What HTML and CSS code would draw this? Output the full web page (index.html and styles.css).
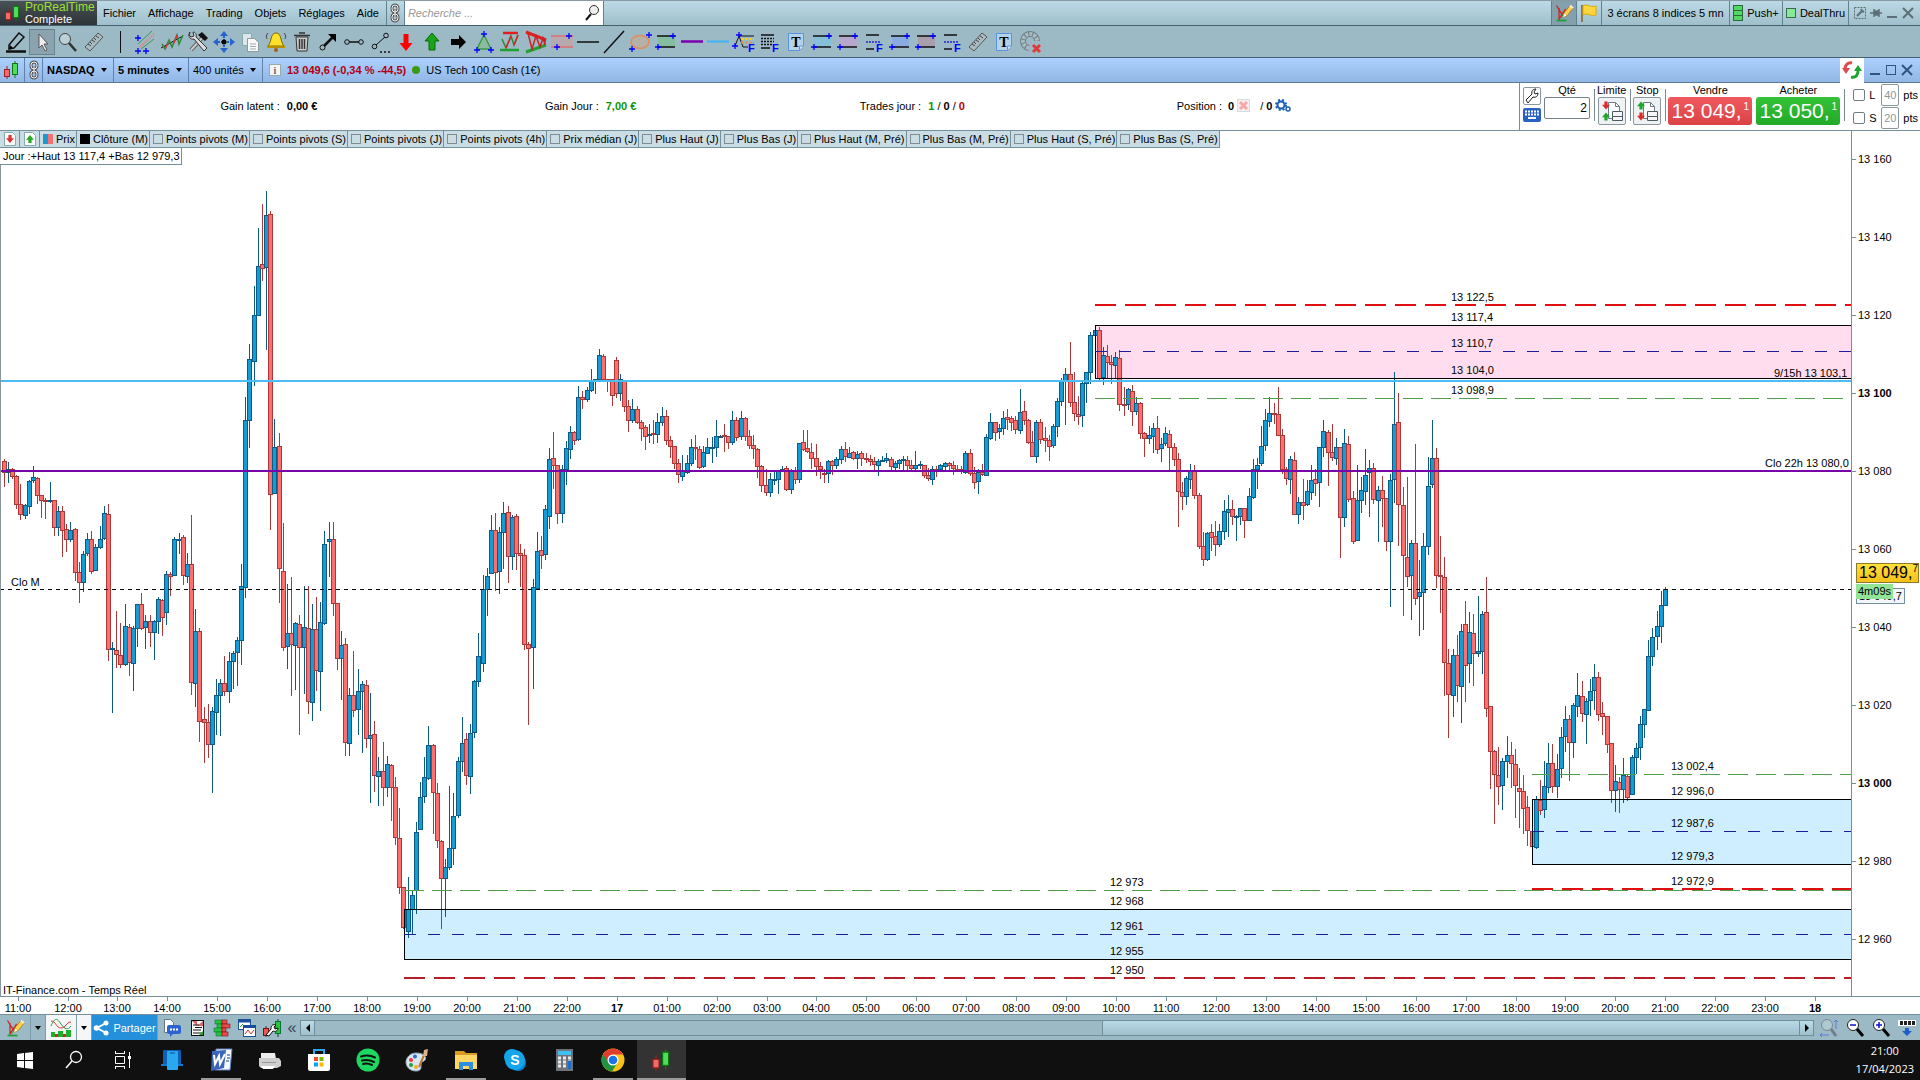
FILE: index.html
```html
<!DOCTYPE html>
<html lang="fr">

<head>
    <meta charset="UTF-8">
    <meta name="viewport" content="width=device-width, initial-scale=1.0">
    <title>ProRealTime Complete - NASDAQ 5 minutes</title>
    <link rel="stylesheet" href="styles.css">
</head>

<body>

    <!-- Icônes partagées -->
    <svg class="sprites" aria-hidden="true">
        <symbol id="i-chain" viewBox="0 0 12 20">
            <g fill="none" stroke="#555" stroke-width="3"><rect x="3" y="2" width="6" height="7" rx="3"/><rect x="3" y="11" width="6" height="7" rx="3"/><path d="M6 6v8"/></g>
            <g fill="none" stroke="#f4f4f4" stroke-width="1"><rect x="3" y="2" width="6" height="7" rx="3"/><rect x="3" y="11" width="6" height="7" rx="3"/><path d="M6 6v8"/></g>
        </symbol>
        <symbol id="i-candles" viewBox="0 0 20 20">
            <path d="M5 6v13" stroke="#a02020"/><rect x="2.5" y="9.500" width="5" height="7" fill="#f26b6b" stroke="#a02020"/>
            <path d="M13 1v17" stroke="#0c7a0c"/><rect x="10.500" y="3.500" width="5" height="11" fill="#4fdc5c" stroke="#0c7a0c"/>
        </symbol>
        <symbol id="i-ruler" viewBox="0 0 24 24">
            <path d="M3 17L16 3l5 4L8 21z" fill="#a9bcc4" stroke="#555"/>
            <path d="M6 14l3 2M8 12l2 2M10 10l3 2M12 8l2 2M14 6l3 2" stroke="#444"/>
        </symbol>
        <symbol id="i-note" viewBox="0 0 24 24">
            <path d="M4.500 3.500h15v12l-4 5h-11z" fill="#b4d3ea" stroke="#5a94e0"/><path d="M15.500 20v-4h4" fill="#d8ebfa" stroke="#5a94e0"/>
            <text x="12" y="17" text-anchor="middle" class="glyph">T</text>
        </symbol>
        <symbol id="i-edit" viewBox="0 0 24 24">
            <path d="M3 21h12" stroke="#18a030" stroke-width="2"/><path d="M3 3l8 13M6 6v14M6 19l8-12" stroke="#c22" stroke-width="1.500" fill="none"/><path d="M8 19l4-7" stroke="#2a2"/>
            <path d="M11 17l1-5 7-9 4 3-7 9z" fill="#ffd24a" stroke="#a07820"/><path d="M11 17l1-4 3 2z" fill="#fff"/><path d="M19 3l4 3" stroke="#eee" stroke-width="2"/>
        </symbol>
        <symbol id="i-fib" viewBox="0 0 24 24">
            <path d="M4 5h13M4 19h8" stroke="#111" stroke-width="1.500"/><path d="M4 12h15" stroke="#22d" stroke-width="1.500" stroke-dasharray="2 1"/>
            <text x="14" y="22" class="blue-f">F</text>
        </symbol>
        <symbol id="i-cross" viewBox="0 0 6 6"><path d="M3 0v6M0 3h6" stroke="#00f" stroke-width="1.300"/></symbol>
        <symbol id="i-wrench" viewBox="0 0 16 16">
            <path d="M2 12l6-6c-1-3 1-5 4-5L10 4l1 2 3-1c0 3-2 5-5 4l-5 6z" fill="#fff" stroke="#222"/>
        </symbol>
        <symbol id="i-order" viewBox="0 0 24 24">
            <path d="M8.500 3.500h7l4 4v12h-11z" fill="#fff" stroke="#6d7b84"/><path d="M15.500 3.500v4h4" fill="none" stroke="#6d7b84"/>
            <path d="M12.500 12.500h10v5h-10zM12.500 17.500h10v4h-10z" fill="#f4f6f7" stroke="#4c5a63"/>
        </symbol>
        <symbol id="i-down" viewBox="0 0 10 10"><path d="M3 0h4v4h3l-5 6-5-6h3z"/></symbol>
        <symbol id="i-up" viewBox="0 0 10 10"><path d="M3 10h4v-4h3l-5-6-5 6h3z"/></symbol>
    </svg>

    <header class="menubar">
        <div class="brand">
            <svg width="20" height="20"><use href="#i-candles"/></svg>
            <div class="brand-text"><span class="brand-name">ProRealTime</span><span>Complete</span></div>
        </div>
        <nav class="menu">
            <a href="#">Fichier</a>
            <a href="#">Affichage</a>
            <a href="#">Trading</a>
            <a href="#">Objets</a>
            <a href="#">Réglages</a>
            <a href="#">Aide</a>
        </nav>
        <button class="cell link-cell" aria-label="Lier"><svg width="12" height="20"><use href="#i-chain"/></svg></button>
        <form class="search">
            <input type="text" aria-label="Recherche" placeholder="Recherche ...">
            <svg width="16" height="18" viewBox="0 0 16 18"><circle cx="10" cy="6" r="4.500" fill="#eee" stroke="#333"/><path d="M7 10l-5 6" stroke="#111" stroke-width="2"/></svg>
        </form>
        <div class="menubar-right">
            <button class="cell icon-cell pressed" aria-label="Dessin"><svg width="20" height="20"><use href="#i-edit"/></svg></button>
            <button class="cell icon-cell flag" aria-label="Drapeau"><svg width="18" height="20" viewBox="0 0 18 20"><path d="M2 2v17" stroke="#8a7a50" stroke-width="2"/><path d="M3 3c5-3 6 2 13 0v9c-6 2-8-3-13 0z" fill="#ffd640" stroke="#e0a800"/></svg></button>
            <button class="cell screens">3 écrans 8 indices 5 mn</button>
            <button class="cell push"><i class="leds"></i>Push+</button>
            <button class="cell deal"><i class="led"></i>DealThru</button>
            <div class="cell window-tools faded">
                <button aria-label="Options"><svg width="12" height="12" viewBox="0 0 12 12"><rect x=".5" y=".5" width="11" height="11" fill="none" stroke="#5d7079" stroke-dasharray="2 1"/><path d="M3 9l5-5M7 2l1 2 2 1" stroke="#5d7079" stroke-width="2" fill="none"/></svg></button>
                <button aria-label="Épingler"><svg width="12" height="12" viewBox="0 0 12 12"><path d="M0 6h4M4 2v8M4 4h4v4H4zM9 2v8M9 6h3" stroke="#5d7079" stroke-width="1.500" fill="#5d7079"/></svg></button>
                <button aria-label="Réduire"><svg width="12" height="12" viewBox="0 0 12 12"><path d="M1 10h10" stroke="#5d7079" stroke-width="2"/></svg></button>
                <button aria-label="Fermer"><svg width="12" height="12" viewBox="0 0 12 12"><path d="M1 1l10 10M11 1L1 11" stroke="#5d7079" stroke-width="2"/></svg></button>
            </div>
        </div>
    </header>

    <div class="toolbar">
        <button aria-label="Crayon"><svg viewBox="0 0 24 24"><path d="M5 15L15 3l5 4L10 18l-5 1z" fill="#9cb9c6" stroke="#111" stroke-width="1.500"/><path d="M5 19l1-4 3 3z"/><path d="M2 21.500h20" stroke="#111" stroke-width="2.500"/></svg></button>
        <button class="selected" aria-label="Curseur"><svg viewBox="0 0 24 24"><path d="M9 4v14l3-3 3 6 2-1-3-6h4z" fill="#eee" stroke="#555"/></svg></button>
        <button aria-label="Loupe"><svg viewBox="0 0 24 24"><circle cx="9" cy="9" r="5.500" fill="#bcd0d8" stroke="#444"/><path d="M13 13l7 8" stroke="#333" stroke-width="2.500"/></svg></button>
        <button aria-label="Règle"><svg><use href="#i-ruler"/></svg></button>
        <span class="split"></span>
        <button aria-label="Canal"><svg viewBox="0 0 24 24"><path d="M7 19L20 9M4 14L18 1" stroke="#3a9a4a"/><path d="M6 17L20 4" stroke="#d88" stroke-width="2" stroke-dasharray="2 1"/><use href="#i-cross" x="1" y="5" width="6" height="6"/><use href="#i-cross" x="1" y="18" width="6" height="6"/><use href="#i-cross" x="9" y="18" width="6" height="6"/></svg></button>
        <button aria-label="Régression"><svg viewBox="0 0 24 24"><path d="M1 18L23 6" stroke="#111"/><path d="M2 14l3 5 4-9 3 7 5-12 2 9 4-9" fill="none" stroke="#2a8a3a" stroke-width="1.500"/><path d="M5 19l3-6M14 13l3-8" stroke="#d33" stroke-width="1.500"/></svg></button>
        <button aria-label="Outils"><svg viewBox="0 0 24 24"><path d="M5 20L17 7" stroke="#555" stroke-width="4"/><path d="M5 20L17 7" stroke="#ccc" stroke-width="2"/><path d="M12 5l4-3 6 6-3 3z" fill="#111"/><path d="M4 2c-3 5 1 8 4 7l10 12 3-3L10 7c1-3-1-5-3-5l1 4-3 1-2-2z" fill="#ddd" stroke="#333"/></svg></button>
        <button aria-label="Déplacer"><svg viewBox="0 0 24 24"><g fill="#2463d0"><path d="M12 1l4 5H8zM12 23l4-5H8zM1 12l5-4v8zM23 12l-5-4v8z"/></g><path d="M12 6v12M6 12h12" stroke="#2463d0" stroke-width="2" stroke-dasharray="2 1"/><circle cx="12" cy="12" r="2.500"/></svg></button>
        <button aria-label="Copier"><svg viewBox="0 0 24 24"><path d="M4.500 3.500h9v12h-9z" fill="#dde6ea" stroke="#8aa"/><path d="M9.500 8.500h7l4 4v9h-11z" fill="#fafafa" stroke="#8a9aa2"/><path d="M12 14h6M12 16.500h6M12 19h6" stroke="#9aa"/></svg></button>
        <button aria-label="Alerte"><svg viewBox="0 0 24 24"><path d="M12 3c6 0 4 9 8 13H4c4-4 2-13 8-13z" fill="#ffe02a" stroke="#806a00"/><path d="M3 17h18" stroke="#b89000" stroke-width="2"/><circle cx="12" cy="20" r="2" fill="#a06020"/><path d="M4 3c-2 2-2 4-1 6M20 3c2 2 2 4 1 6" fill="none" stroke="#445"/></svg></button>
        <button aria-label="Supprimer"><svg viewBox="0 0 24 24"><path d="M6 7h12l-1 14H7z" fill="#ccc" stroke="#333"/><path d="M4 5.500h16M9 3h6M9.500 9v10M12 9v10M14.500 9v10" stroke="#333" stroke-width="1.500"/></svg></button>
        <button aria-label="Flèche"><svg viewBox="0 0 24 24"><circle cx="6.500" cy="17.500" r="2.500" fill="none" stroke="#111"/><path d="M8 16l9-9" stroke="#111" stroke-width="2.500"/><path d="M12 4h8v8z"/></svg></button>
        <button aria-label="Segment"><svg viewBox="0 0 24 24"><path d="M7 12h10" stroke="#111" stroke-width="1.500"/><circle cx="5" cy="12" r="2.300" fill="none" stroke="#111"/><circle cx="19" cy="12" r="2.300" fill="none" stroke="#111"/></svg></button>
        <button aria-label="Segment prolongé"><svg viewBox="0 0 24 24"><path d="M8 15l9-8" stroke="#111"/><circle cx="6.500" cy="16.500" r="2.300" fill="none" stroke="#111"/><circle cx="18" cy="5.500" r="2.300" fill="none" stroke="#111"/><path d="M12 22h11" stroke="#111" stroke-width="1.500" stroke-dasharray="2 2"/></svg></button>
        <button aria-label="Flèche rouge"><svg viewBox="0 0 24 24"><path d="M9.500 4h5v9h4l-6.500 8-6.500-8h4z" fill="#f00"/></svg></button>
        <button aria-label="Flèche verte"><svg viewBox="0 0 24 24"><path d="M9 20h6v-9h4L12 3l-7 8h4z" fill="#19a419" stroke="#0a6a0a"/></svg></button>
        <button aria-label="Flèche noire"><svg viewBox="0 0 24 24"><path d="M5 9h8V5l7 7-7 7v-4H5z"/></svg></button>
        <button aria-label="Triangle"><svg viewBox="0 0 24 24"><path d="M12 5l7 14H5z" fill="#8dbba0" stroke="#3a9a4a" stroke-width="1.500"/><use href="#i-cross" x="9" y="1" width="6" height="6"/><use href="#i-cross" x="2" y="17" width="6" height="6"/><use href="#i-cross" x="16" y="17" width="6" height="6"/></svg></button>
        <button aria-label="Rectangle W"><svg viewBox="0 0 24 24"><path d="M5 3h15" stroke="#e02020" stroke-width="2.500"/><path d="M2 20h19" stroke="#20a030" stroke-width="2.500"/><path d="M4 9l4 9 5-12 3 9 4-10" fill="none" stroke="#2a8a3a" stroke-width="1.500"/><path d="M8 18l5-12M16 15l4-10" stroke="#d22" stroke-width="1.500"/></svg></button>
        <button aria-label="Triangle W"><svg viewBox="0 0 24 24"><path d="M2 2l20 8" stroke="#e02020" stroke-width="3"/><path d="M2 22l20-7" stroke="#20a030" stroke-width="3"/><path d="M4 3l4 16 4-13 4 11 3-9 2 7V9" fill="none" stroke="#c22" stroke-width="1.500"/></svg></button>
        <button aria-label="Zone"><svg viewBox="0 0 24 24"><path d="M1 6h22v11H1z" fill="#b7a9b0"/><path d="M1 6h22M1 17h22" stroke="#e07070" stroke-width="1.500"/><use href="#i-cross" x="16" y="3" width="6" height="6"/><use href="#i-cross" x="4" y="14" width="6" height="6"/></svg></button>
        <button aria-label="Horizontale"><svg viewBox="0 0 24 24"><path d="M1 12h22" stroke="#111" stroke-width="1.500"/></svg></button>
        <button aria-label="Droite"><svg viewBox="0 0 24 24"><path d="M2 23L22 1" stroke="#111" stroke-width="1.500"/></svg></button>
        <button aria-label="Ellipse"><svg viewBox="0 0 24 24"><ellipse cx="12" cy="12" rx="9" ry="6.500" fill="#b5b0a8" stroke="#e58a5a" stroke-width="1.500"/><use href="#i-cross" x="18" y="2" width="6" height="6"/><use href="#i-cross" x="1" y="16" width="6" height="6"/></svg></button>
        <button aria-label="Rectangle vert"><svg viewBox="0 0 24 24"><path class="zone-green" d="M4 6h17v11H4z"/><path d="M3 6h18M3 17h18" stroke="#111" stroke-width="1.500"/><use href="#i-cross" x="16" y="3" width="6" height="6"/><use href="#i-cross" x="1" y="14" width="6" height="6"/></svg></button>
        <button aria-label="Ligne violette"><svg viewBox="0 0 24 24"><path d="M1 11.500h22" stroke="#7a00b4" stroke-width="2.500"/></svg></button>
        <button aria-label="Ligne bleue"><svg viewBox="0 0 24 24"><path d="M1 11.500h22" stroke="#3fb4f4" stroke-width="2"/></svg></button>
        <button aria-label="Fibonacci"><svg viewBox="0 0 24 24"><path d="M3 16l4-10 4 11h5M7 6h15" fill="none" stroke="#111"/><path d="M9 9h13" stroke="#ffd000" stroke-width="2" stroke-dasharray="3 1"/><path d="M9 12.500h13" stroke="#f09040" stroke-width="2" stroke-dasharray="3 1"/><use href="#i-cross" x="4" y="2" width="6" height="6"/><use href="#i-cross" x="0" y="13" width="6" height="6"/><text x="16" y="22" class="blue-f">F</text></svg></button>
        <button aria-label="Niveaux"><svg viewBox="0 0 24 24"><path d="M3 5h13M3 18h9" stroke="#111" stroke-width="1.500"/><path d="M3 8.500h13M3 11.500h13M3 14.500h11" stroke="#111" stroke-width="1.500" stroke-dasharray="2 1"/><text x="14" y="22" class="blue-f">F</text></svg></button>
        <button aria-label="Texte"><svg><use href="#i-note"/></svg></button>
        <button aria-label="Rectangle bleu"><svg viewBox="0 0 24 24"><path class="zone-blue" d="M4 6h17v11H4z"/><path d="M3 6h18M3 17h18" stroke="#111" stroke-width="1.500"/><use href="#i-cross" x="16" y="3" width="6" height="6"/><use href="#i-cross" x="1" y="14" width="6" height="6"/></svg></button>
        <button aria-label="Rectangle rose"><svg viewBox="0 0 24 24"><path class="zone-pink" d="M4 6h17v11H4z"/><path d="M3 6h18M3 17h18" stroke="#111" stroke-width="1.500"/><use href="#i-cross" x="16" y="3" width="6" height="6"/><use href="#i-cross" x="1" y="14" width="6" height="6"/></svg></button>
        <button aria-label="Niveaux 2"><svg><use href="#i-fib"/></svg></button>
        <button aria-label="Rectangle bleu 2"><svg viewBox="0 0 24 24"><path class="zone-blue2" d="M4 6h17v11H4z"/><path d="M3 6h18M3 17h18" stroke="#111" stroke-width="1.500"/><use href="#i-cross" x="16" y="3" width="6" height="6"/><use href="#i-cross" x="1" y="14" width="6" height="6"/></svg></button>
        <button aria-label="Rectangle brun"><svg viewBox="0 0 24 24"><path class="zone-brown" d="M4 6h17v11H4z"/><path d="M3 6h18M3 17h18" stroke="#111" stroke-width="1.500"/><use href="#i-cross" x="16" y="3" width="6" height="6"/><use href="#i-cross" x="1" y="14" width="6" height="6"/></svg></button>
        <button aria-label="Niveaux 3"><svg><use href="#i-fib"/></svg></button>
        <button aria-label="Règle 2"><svg><use href="#i-ruler"/></svg></button>
        <button aria-label="Texte 2"><svg><use href="#i-note"/></svg></button>
        <button aria-label="Effacer"><svg viewBox="0 0 24 24"><path d="M11 18a7 7 0 1 1 8-7" fill="none" stroke="#6f7f86" stroke-width="6"/><path d="M11 18a7 7 0 1 1 8-7" fill="none" stroke="#a9bcc4" stroke-width="4" stroke-dasharray="3 1"/><path d="M15 15l7 7M22 15l-7 7" stroke="#e03a3a" stroke-width="3"/></svg></button>
    </div>

    <div class="titlebar">
        <div class="cell icon-cell"><svg width="20" height="20"><use href="#i-candles"/></svg></div>
        <button class="cell link-cell" aria-label="Lier la fenêtre"><svg width="12" height="20"><use href="#i-chain"/></svg></button>
        <label class="cell pick bold"><select aria-label="Valeur"><option>NASDAQ</option></select></label>
        <label class="cell pick bold"><select aria-label="Unité de temps"><option>5 minutes</option></select></label>
        <label class="cell pick"><select aria-label="Unités"><option>400 unités</option></select></label>
        <div class="quote">
            <button class="info" aria-label="Information">i</button>
            <b>13 049,6 (-0,34 % -44,5)</b>
            <i class="status-dot"></i>
            <span>US Tech 100 Cash (1€)</span>
        </div>
        <button class="refresh" aria-label="Actualiser"><svg width="20" height="20" viewBox="0 0 20 20"><path d="M10 3c-4-1-7 2-7 6" fill="none" stroke="#e0484c" stroke-width="3"/><path d="M0 8h8l-4 6z" fill="#e0484c"/><path d="M9 17c5 1 7-2 7-6" fill="none" stroke="#1ca52c" stroke-width="3"/><path d="M12 11h8l-4-6z" fill="#1ca52c"/></svg></button>
        <div class="window-tools">
            <button aria-label="Réduire la fenêtre"><svg width="12" height="12" viewBox="0 0 12 12"><path d="M1 10h10" stroke="#2f5680" stroke-width="2"/></svg></button>
            <button aria-label="Agrandir la fenêtre"><svg width="12" height="12" viewBox="0 0 12 12"><rect x="1.500" y="1.500" width="9" height="9" fill="none" stroke="#2f5680"/></svg></button>
            <button aria-label="Fermer la fenêtre"><svg width="12" height="12" viewBox="0 0 12 12"><path d="M1 1l10 10M11 1L1 11" stroke="#2f5680" stroke-width="2"/></svg></button>
        </div>
    </div>

    <section class="trading">
        <div class="stats">
            <p>Gain latent : <b>0,00 €</b></p>
            <p>Gain Jour : <b class="green">7,00 €</b></p>
            <p>Trades jour : <span><b class="green">1</b> / <b>0</b> / <b class="red">0</b></span></p>
            <p class="position"><span>Position : </span><b>0</b><svg width="14" height="14" viewBox="0 0 14 14"><rect x=".5" y=".5" width="12" height="12" fill="#fdeeee" stroke="#d5dde2"/><path d="M3 3l7 7M10 3l-7 7" stroke="#f3a9ab" stroke-width="3"/></svg><span>  /</span><b>0</b><svg width="16" height="14" viewBox="0 0 16 14"><circle cx="6" cy="6" r="3.500" fill="none" stroke="#1d5fb8" stroke-width="2"/><circle cx="6" cy="6" r="5" fill="none" stroke="#1d5fb8" stroke-width="2" stroke-dasharray="2 2"/><circle cx="13" cy="10" r="2" fill="none" stroke="#1d5fb8" stroke-width="1.500"/></svg></p>
        </div>
        <div class="ticket">
            <div class="side-buttons">
                <button class="wrench" aria-label="Réglages des ordres"><svg width="16" height="16"><use href="#i-wrench"/></svg></button>
                <button class="keyboard" aria-label="Clavier"><svg width="14" height="10" viewBox="0 0 14 10"><path d="M0 1.500h14M0 4.500h14" stroke="#fff" stroke-width="2" stroke-dasharray="2 1"/><path d="M3 8h8" stroke="#fff" stroke-width="2"/></svg></button>
            </div>
            <div class="field qty"><label for="qty">Qté</label><input type="text" id="qty" value="2"></div>
            <div class="field edged"><span>Limite</span><button class="order" aria-label="Limite"><svg width="24" height="24" viewBox="0 0 24 24"><use href="#i-order"/><use href="#i-down" x="2" y="2" width="8" height="9" fill="#d92b2b"/><use href="#i-up" x="2" y="13" width="8" height="9" fill="#1fa62c"/></svg></button></div>
            <div class="field edged"><span>Stop</span><button class="order" aria-label="Stop"><svg width="24" height="24" viewBox="0 0 24 24"><use href="#i-order"/><use href="#i-up" x="2" y="2" width="8" height="9" fill="#1fa62c"/><use href="#i-down" x="2" y="13" width="8" height="9" fill="#d92b2b"/></svg></button></div>
            <div class="field edged"><span>Vendre</span><button class="deal-btn sell">13 049,<sup>1</sup></button></div>
            <div class="field"><span>Acheter</span><button class="deal-btn buy">13 050,<sup>1</sup></button></div>
            <div class="limits">
                <div class="limit-row"><input type="checkbox" id="lim"><label for="lim">L</label><input type="text" class="pts" aria-label="Limite en points" value="40">pts</div>
                <div class="limit-row"><input type="checkbox" id="stp"><label for="stp">S</label><input type="text" class="pts" aria-label="Stop en points" value="20">pts</div>
            </div>
        </div>
    </section>

    <main class="chart">
        <svg class="plot" id="plot" viewBox="0 131 1851 865" preserveAspectRatio="xMinYMin slice" role="img" aria-label="NASDAQ en 5 minutes">
            <rect class="sell-zone" x="1095" y="325" width="760" height="53"/>
            <rect class="buy-zone" x="404" y="909" width="1450" height="50"/>
            <rect class="buy-zone" x="1532" y="799" width="330" height="65"/>
            <g id="candles"></g>
            <rect class="frame" x="1095.500" y="325.500" width="760" height="53"/>
            <rect class="frame" x="404.500" y="909.500" width="1450" height="50"/>
            <rect class="frame" x="1532.500" y="799.500" width="330" height="65"/>
            <path class="lv mid" d="M1095 351.500H1851M404 934.500H1851M1532 831.500H1851"/>
            <path class="lv target" d="M1095 398.500H1851M404 890.500H1851M1532 774.500H1851"/>
            <path class="lv red" d="M1095 305H1851M1532 889H1851"/>
            <path class="lv darkred" d="M404 978H1851"/>
            <path class="cyan" d="M0 381H1851"/>
            <path class="purple" d="M0 471H1851"/>
            <path class="last" d="M0 589.500H1851"/>
            <path class="edge" d="M.5 131V996"/>
            <g id="levels"></g>
        </svg>
        <div class="indicators">
            <button class="ind icon" aria-label="Vers le bas"><svg width="14" height="14" viewBox="0 0 14 14"><path d="M1.500.5h8l3 3v10h-11z" fill="#fff" stroke="#8aa"/><use href="#i-down" x="3" y="3" width="8" height="8" fill="#d33"/></svg></button>
            <button class="ind icon" aria-label="Vers le haut"><svg width="14" height="14" viewBox="0 0 14 14"><path d="M1.500.5h8l3 3v10h-11z" fill="#fff" stroke="#8aa"/><use href="#i-up" x="3" y="3" width="8" height="8" fill="#2a2"/></svg></button>
            <button class="ind"><i class="swatch price"></i>Prix</button>
            <button class="ind"><i class="swatch close"></i>Clôture (M)</button>
            <label class="ind"><input type="checkbox">Points pivots (M)</label>
            <label class="ind"><input type="checkbox">Points pivots (S)</label>
            <label class="ind"><input type="checkbox">Points pivots (J)</label>
            <label class="ind"><input type="checkbox">Points pivots (4h)</label>
            <label class="ind"><input type="checkbox">Prix médian (J)</label>
            <label class="ind"><input type="checkbox">Plus Haut (J)</label>
            <label class="ind"><input type="checkbox">Plus Bas (J)</label>
            <label class="ind"><input type="checkbox">Plus Haut (M, Pré)</label>
            <label class="ind"><input type="checkbox">Plus Bas (M, Pré)</label>
            <label class="ind"><input type="checkbox">Plus Haut (S, Pré)</label>
            <label class="ind"><input type="checkbox">Plus Bas (S, Pré)</label>
        </div>
        <div class="day-range">Jour :+Haut 13 117,4 +Bas 12 979,3</div>
        <div class="price-axis">
            <svg id="prices" viewBox="1852 131 68 865" preserveAspectRatio="xMinYMin slice"></svg>
            <div class="tag-close">13 049,7</div>
            <div class="tag-timer">4m09s</div>
            <div class="tag-last">13 049,<sup>7</sup></div>
        </div>
    </main>

    <div class="time-axis"><svg id="hours" viewBox="0 0 1920 17" preserveAspectRatio="xMinYMin slice"></svg></div>

    <div class="bottombar">
        <button class="b-icon" aria-label="Dessiner"><svg width="22" height="20" viewBox="0 0 24 24"><use href="#i-edit"/></svg></button>
        <button class="b-arrow" aria-label="Plus d'outils"></button>
        <button class="b-icon white" aria-label="Indicateurs"><svg width="22" height="20" viewBox="0 0 22 20"><path d="M1 8c4-9 6-8 10-2s7 6 10 2" fill="none" stroke="#2a9a3a"/><path d="M1 3c5 0 5 7 10 7s5-6 10-6" fill="none" stroke="#d33"/><path d="M1 19v-5h4v2h3v-3h5v3h3v-4h5v7z" fill="#1cb02c"/><path d="M5 19v-3h3v3zM13 19v-3h3v3z" fill="#d22"/></svg></button>
        <button class="b-arrow white" aria-label="Plus d'indicateurs"></button>
        <button class="share"><svg width="16" height="16" viewBox="0 0 16 16"><path d="M13 3L4 8l9 5" fill="none" stroke="#fff" stroke-width="2"/><g fill="#fff"><circle cx="13" cy="3" r="2.500"/><circle cx="3.500" cy="8" r="2.800"/><circle cx="13" cy="13" r="2.500"/></g></svg>Partager</button>
        <div class="mini-icons">
            <button aria-label="Commentaires"><svg viewBox="0 0 20 20"><path d="M2.500 1.500h6l3 3v10h-9z" fill="#fff" stroke="#678"/><rect x="5" y="7" width="14" height="9" rx="2" fill="#2e62cf"/><path d="M8 15v4l4-4z" fill="#2e62cf"/><path d="M8 11.500h9" stroke="#fff" stroke-width="2" stroke-dasharray="2 1"/></svg></button>
            <button aria-label="Carnet"><svg viewBox="0 0 20 20"><rect x="4.500" y="2.500" width="12" height="15" fill="#fff" stroke="#111"/><path d="M5 3l5 5V3zM16 3l-6 5h6z" fill="#d66"/><path d="M6 7h6M8 9.500h7M6 12h8M6 15h9" stroke="#111"/><path d="M16 13v4h-4z" fill="#2a2"/></svg></button>
            <button aria-label="Profondeur"><svg viewBox="0 0 20 20"><g fill="#27c13c" stroke="#064" stroke-width=".5"><rect x="3" y="2" width="7" height="4"/><rect x="5" y="6" width="5" height="4"/><rect x="2" y="10" width="8" height="4"/><rect x="4" y="14" width="6" height="4"/></g><g fill="#ea4c4c" stroke="#600" stroke-width=".5"><rect x="10" y="2" width="5" height="4"/><rect x="10" y="6" width="8" height="4"/><rect x="10" y="10" width="4" height="4"/><rect x="10" y="14" width="6" height="4"/></g></svg></button>
            <button aria-label="Fenêtres"><svg viewBox="0 0 20 20"><rect x="1.500" y="1.500" width="12" height="10" fill="#fff" stroke="#1b4f9c"/><path d="M2 3h11M7 9h11" stroke="#1b4f9c" stroke-width="3"/><rect x="6.500" y="7.500" width="12" height="11" fill="none" stroke="#1b4f9c"/><rect x="7" y="10" width="11" height="8" fill="#fff"/><path d="M8 16l3-4 3 4 3-4" fill="none" stroke="#c33"/><path d="M3 9l3-3" stroke="#2a2"/></svg></button>
            <button aria-label="Système"><svg viewBox="0 0 20 20"><path d="M16 1v18M4 8v11" stroke="#333"/><rect x="13.500" y="3.500" width="5" height="12" fill="#2bc43c" stroke="#073"/><rect x="1.500" y="10.500" width="5" height="7" fill="#e55" stroke="#711"/><path d="M4 17l5-6c0-4 2-5 5-4l-2 2 1 2 3-1c0 3-3 4-5 3l-4 5z" fill="#fff" stroke="#111"/></svg></button>
        </div>
        <button class="fold" aria-label="Replier">«</button>
        <div class="scroll">
            <button class="s-btn left" aria-label="Reculer"></button>
            <div class="s-track"><div class="s-thumb"></div></div>
            <button class="s-btn right" aria-label="Avancer"></button>
        </div>
        <div class="zoom">
            <button aria-label="Zoom auto"><svg class="dim" viewBox="0 0 20 20"><circle cx="8" cy="7" r="5.500" fill="#bcd4d8" stroke="#667"/><path d="M12 11l5 7" stroke="#556" stroke-width="3"/><path d="M1 17h9M3 15l-2 2 2 2M17 2v9M15 4l2-2 2 2" stroke="#35d" fill="none"/></svg></button>
            <button aria-label="Dézoomer"><svg viewBox="0 0 20 20"><circle cx="8" cy="7" r="5.500" fill="#fff" stroke="#222"/><path d="M12 11l6 7" stroke="#000" stroke-width="3"/><path d="M5 7h6" stroke="#11c" stroke-width="1.500"/></svg></button>
            <button aria-label="Zoomer"><svg viewBox="0 0 20 20"><circle cx="8" cy="7" r="5.500" fill="#fff" stroke="#222"/><path d="M12 11l6 7" stroke="#000" stroke-width="3"/><path d="M5 7h6M8 4v6" stroke="#11c" stroke-width="1.500"/></svg></button>
            <button aria-label="Clavier bas"><svg viewBox="0 0 20 20"><rect x="1" y="2" width="18" height="6" fill="#fff"/><path d="M3 5h15" stroke="#222" stroke-width="4" stroke-dasharray="3 1"/><path d="M8 10h4v3h3l-5 5-5-5h3z" fill="#1f5fc8"/></svg></button>
        </div>
    </div>

    <footer class="taskbar">
        <button aria-label="Démarrer"><svg viewBox="0 0 24 24"><path d="M4 6l7-1v7H4zM12 5l8-1v8h-8zM4 13h7v7l-7-1zM12 13h8v8l-8-1z" fill="#fff"/></svg></button>
        <button aria-label="Rechercher"><svg viewBox="0 0 24 24"><circle cx="14" cy="9" r="5.500" fill="none" stroke="#fff" stroke-width="1.300"/><path d="M10 13l-6 7" stroke="#fff" stroke-width="1.500"/></svg></button>
        <button aria-label="Vue des tâches"><svg viewBox="0 0 24 24"><path d="M4 5.500h10M4.500 3v3M13.500 3v3M4.500 8.500h9v7h-9zM4 18.500h10M4.500 18v3M13.500 18v3M18.500 4v16" fill="none" stroke="#fff"/><rect x="17" y="8" width="3" height="3" fill="#fff"/></svg></button>
        <button aria-label="Téléphone"><svg viewBox="0 0 24 24"><rect x="3" y="2" width="18" height="16" rx="1" fill="#0f5fb4"/><rect x="7" y="3" width="11" height="19" rx="1" fill="#29a8f0"/><path d="M1 16h6v2H1zM18 16h5v2h-5z" fill="#1577cf"/><path d="M10 5h5" stroke="#0a4d96"/></svg></button>
        <button class="open" aria-label="Word"><svg viewBox="0 0 24 24"><path d="M7 1h16l-2 21H6z" fill="#f6f9ff" stroke="#5a7fc4"/><path d="M3 3l14-1-2 18-13 3z" fill="#3b66b8"/><path d="M5 7l1 9 4-8 1 8 5-10" fill="none" stroke="#fff" stroke-width="2"/><path d="M18 7h3M18 10h3M17 13h3" stroke="#5a7fc4" stroke-width="1.500"/></svg></button>
        <button aria-label="Imprimante"><svg viewBox="0 0 24 24"><path d="M3 5h14l1 6H3z" fill="#eee"/><path d="M1 10h20l2 3v5l-4 2H3l-2-2z" fill="#cfcfcf"/><path d="M4 14h14v1H4z" fill="#999"/><path d="M3 18h14l-2 3H5z" fill="#fff"/></svg></button>
        <button aria-label="Store"><svg viewBox="0 0 24 24"><path d="M7 7V2h10v5" fill="none" stroke="#30a8e8" stroke-width="2"/><path d="M1 6h22v15q0 2-2 2H3q-2 0-2-2z" fill="#fff"/><path d="M7 9h4v4H7z" fill="#f25022"/><path d="M12.500 9h4v4h-4z" fill="#7fba00"/><path d="M7 14.500h4v4H7z" fill="#00a4ef"/><path d="M12.500 14.500h4v4h-4z" fill="#ffb900"/></svg></button>
        <button aria-label="Spotify"><svg viewBox="0 0 24 24"><circle cx="12" cy="12" r="11.500" fill="#1ed760"/><path d="M5 8.500c5-1.500 10-1 14 1M6 12.500c4-1 8-.5 12 1.500M7 16c3-1 6-.5 9 1" fill="none" stroke="#111" stroke-width="2" stroke-linecap="round"/></svg></button>
        <button aria-label="Paint"><svg viewBox="0 0 24 24"><path d="M11 5c8 0 11 4 9 7-1 2-4 1-4 4s1 7-5 7C4 23 1 18 1 14s4-9 10-9z" fill="#d9e6f0" stroke="#8ab"/><circle cx="6" cy="12" r="2" fill="#e33"/><circle cx="10" cy="8.500" r="2" fill="#2a6fd0"/><circle cx="6" cy="17" r="2" fill="#2a9a3a"/><circle cx="11" cy="19" r="2" fill="#f0b020"/><path d="M14 19l5-12" stroke="#c07830" stroke-width="2"/><path d="M18 8l1-6 4-1-1 7z" fill="#e0b080"/></svg></button>
        <button class="open" aria-label="Explorateur"><svg viewBox="0 0 24 24"><path d="M1 3h9l2 2h11v4H1z" fill="#d99b20"/><path d="M1 7h22v14H1z" fill="#ffd764"/><path d="M5 22v-8h14v8h-4v-4H9v4z" fill="#2d8fe0"/></svg></button>
        <button aria-label="Skype"><svg viewBox="0 0 24 24"><circle cx="9" cy="9" r="8" fill="#14a6ea"/><circle cx="15" cy="15" r="8" fill="#0a84d0"/><circle cx="12" cy="12" r="10" fill="#14a6ea"/><text x="12" y="17" text-anchor="middle" class="skype">S</text></svg></button>
        <button aria-label="Calculatrice"><svg viewBox="0 0 24 24"><rect x="4" y="1" width="17" height="22" fill="#6d7378"/><rect x="6" y="3" width="13" height="4" fill="#3fc0f0"/><path d="M6 10h13M6 14h13M6 18h8" stroke="#e8eaec" stroke-width="3" stroke-dasharray="3 2"/><rect x="16" y="13" width="3" height="8" fill="#1a6fc8"/></svg></button>
        <button class="open" aria-label="Chrome"><svg viewBox="0 0 24 24"><circle cx="12" cy="12" r="11.500" fill="#fbc116"/><path d="M12 12L2 6.500A11.500 11.500 0 0 0 11 23.500l5-8z" fill="#229342"/><path d="M2 6.500A11.500 11.500 0 0 1 22 6.500H12v5.500l-6 0z" fill="#e33b2e"/><circle cx="12" cy="12" r="5.500" fill="#fff"/><circle cx="12" cy="12" r="4.300" fill="#1a73e8"/></svg></button>
        <button class="open current" aria-label="ProRealTime"><svg viewBox="0 0 20 20"><use href="#i-candles"/></svg></button>
        <div class="clock"><time>21:00</time><time>17/04/2023</time></div>
    </footer>

    <script src="chart.js"></script>
</body>

</html>
```
FILE: styles.css
```css
* {
    margin: 0;
    padding: 0;
    box-sizing: border-box;
}

body {
    font-family: "Liberation Sans", Arial, sans-serif;
    font-size: 11px;
    line-height: 14px;
    color: #000;
    background: #fff;
    height: 100vh;
    display: flex;
    flex-direction: column;
    overflow: hidden;
}

button,
input,
select {
    font: inherit;
    color: inherit;
    border: none;
    background: none;
}

a {
    color: inherit;
    text-decoration: none;
}

svg {
    display: block;
    flex: none;
}

.sprites {
    position: absolute;
    width: 0;
    height: 0;
}

.glyph {
    font: bold 14px "Liberation Serif", serif;
}

.blue-f {
    font: bold 11px "Liberation Sans", sans-serif;
    fill: #00f;
}

.green {
    color: #0a960a;
}

.red {
    color: #b00000;
}

.cell {
    display: flex;
    align-items: center;
    justify-content: center;
    height: 100%;
    border-right: 1px solid #5f8190;
    white-space: nowrap;
}

/* Barre de menus */
.menubar {
    display: flex;
    height: 26px;
    flex: none;
    border-top: 1px solid #8a9aa2;
    border-bottom: 1px solid #456070;
    background: linear-gradient(#bcdae5, #9fbfcb);
}

.brand {
    display: flex;
    align-items: center;
    gap: 2px;
    width: 97px;
    padding-left: 3px;
    background: linear-gradient(#485156, #2e3437);
    color: #fff;
}

.brand-text {
    display: flex;
    flex-direction: column;
    line-height: 12px;
}

.brand-name {
    font-size: 12px;
    color: #9be03a;
}

.menu {
    display: flex;
    align-items: center;
    gap: 12px;
    padding: 0 7px 0 6px;
    border-right: 1px solid #5f8190;
}

.link-cell {
    width: 18px;
}

.icon-cell {
    width: 25px;
}

.search {
    display: flex;
    align-items: center;
    width: 199px;
    padding: 0 3px;
    background: #fff;
    border-right: 1px solid #5f8190;
}

.search input {
    flex: 1;
    min-width: 0;
    outline: none;
}

.search input::placeholder {
    color: #999;
    font-style: italic;
}

.menubar-right {
    display: flex;
    margin-left: auto;
    border-left: 1px solid #5f8190;
}

.pressed {
    background: #84a0ac;
}

.screens {
    width: 128px;
}

.push {
    width: 53px;
    gap: 4px;
}

.deal {
    width: 66px;
    gap: 4px;
}

.leds {
    width: 10px;
    height: 16px;
    border: 1px solid #2a6a3a;
    background: repeating-linear-gradient(#52d860 0 4px, #2a6a3a 4px 5px);
}

.led {
    width: 10px;
    height: 10px;
    border: 1px solid #3a6a50;
    background: #86ea96;
}

.window-tools {
    display: flex;
    align-items: center;
    gap: 4px;
    padding: 0 7px 0 5px;
}

.menubar .faded {
    width: 71px;
    border: none;
}

/* Barre d'outils de dessin */
.toolbar {
    display: flex;
    align-items: center;
    height: 32px;
    flex: none;
    padding: 0 3px;
    border-bottom: 1px solid #456070;
    background: #9cb9c6;
}

.toolbar button,
.split {
    width: 26px;
    height: 26px;
    display: grid;
    place-items: center;
}

.toolbar svg {
    width: 24px;
    height: 24px;
}

.toolbar .selected {
    background: #8ba3ae;
    border: 1px solid #6b838e;
}

.split::before {
    content: "";
    height: 22px;
    border-left: 1px solid #111;
}

.zone-green {
    fill: #84bda0;
}

.zone-blue {
    fill: #86bfd8;
}

.zone-pink {
    fill: #b5a8cc;
}

.zone-blue2 {
    fill: #8bace0;
}

.zone-brown {
    fill: #a99eac;
}

/* Barre de titre du graphique */
.titlebar {
    display: flex;
    align-items: center;
    height: 25px;
    flex: none;
    border-bottom: 1px solid #5a7a9a;
    background: linear-gradient(#acd1ff, #92b7e4);
}

.titlebar .cell {
    border-color: #5f82ac;
}

.pick {
    gap: 6px;
    padding: 0 6px 0 4px;
}

.pick select {
    appearance: none;
}

.pick::after {
    content: "";
    border: 3px solid transparent;
    border-top: 4px solid #000;
    border-bottom: none;
}

.bold {
    font-weight: bold;
}

.quote {
    display: flex;
    align-items: center;
    gap: 6px;
    padding-left: 6px;
    flex: 1;
}

.quote b {
    color: #b00010;
}

.info {
    width: 12px;
    height: 12px;
    border: 1px solid #9aa;
    background: #f4f4f4;
    color: #666;
    font: bold 10px "Liberation Serif", serif;
}

.status-dot {
    width: 8px;
    height: 8px;
    border-radius: 50%;
    background: #3c9a10;
}

.refresh {
    width: 24px;
    height: 25px;
    padding: 2px;
    background: #fff;
}

/* Bandeau de trading */
.trading {
    display: flex;
    height: 48px;
    flex: none;
    border-bottom: 1px solid #74909c;
}

.stats {
    flex: 1;
    display: grid;
    grid-template-columns: repeat(4, 1fr);
    align-items: center;
    padding: 0 124px 2px 108px;
}

.stats p {
    display: flex;
    align-items: center;
    justify-content: center;
    gap: 4px;
    white-space: pre;
}

.stats .position {
    gap: 3px;
}

.ticket {
    display: flex;
    width: 401px;
    padding-left: 3px;
    border-left: 1px solid #74909c;
}

.side-buttons {
    display: flex;
    flex-direction: column;
    gap: 3px;
    padding: 4px 3px 0 0;
}

.wrench {
    width: 18px;
    height: 18px;
    border: 1px solid #8a979e;
    border-radius: 2px;
}

.keyboard {
    width: 18px;
    height: 14px;
    padding: 2px;
    border-radius: 2px;
    background: #2a62c4;
}

.field {
    display: flex;
    flex-direction: column;
    align-items: center;
    padding-right: 4px;
}

.field input {
    width: 46px;
    height: 22px;
    padding-right: 2px;
    border: 1px solid #74818a;
    border-radius: 2px;
    text-align: right;
    font-size: 12px;
}

.edged {
    padding-left: 3px;
    background: linear-gradient(#7a8a92, #7a8a92) left 6px / 1px 32px no-repeat;
}

.order {
    width: 28px;
    height: 28px;
    padding: 1px;
    border: 1px solid #8a979e;
    border-radius: 2px;
    background: #eef2f4;
}

.deal-btn {
    width: 84px;
    height: 28px;
    border-radius: 3px;
    color: #fff;
    font-size: 21px;
    line-height: 28px;
    white-space: nowrap;
}

.deal-btn sup {
    font-size: 10px;
    line-height: 10px;
    padding-left: 2px;
}

.sell {
    background: linear-gradient(#f05a5e, #da4246);
}

.buy {
    background: linear-gradient(#34c23a, #22aa28);
}

.limits {
    display: flex;
    flex-direction: column;
    gap: 1px;
    padding: 1px 0 0 9px;
    background: linear-gradient(#7a8a92, #7a8a92) left 6px / 1px 32px no-repeat;
}

.limit-row {
    display: flex;
    align-items: center;
    gap: 4px;
    height: 22px;
}

.limit-row label {
    width: 8px;
}

.limit-row input[type=checkbox] {
    appearance: none;
    width: 12px;
    height: 12px;
    border: 1px solid #707c84;
    border-radius: 2px;
}

.pts {
    width: 18px;
    height: 22px;
    border: 1px solid #8a979e;
    border-radius: 2px;
    color: #8c979d;
    text-align: center;
}

/* Graphique */
.chart {
    position: relative;
    display: flex;
    flex: 1;
    min-height: 0;
    border-bottom: 1px solid #74909c;
}

.plot {
    flex: 1;
    min-width: 0;
    height: 100%;
}

.plot * {
    shape-rendering: crispEdges;
}

.plot text,
.price-axis text,
.time-axis text {
    font-size: 11px;
}

.sell-zone {
    fill: #ffdcee;
}

.buy-zone {
    fill: #cfeeff;
}

.frame {
    fill: none;
    stroke: #000;
}

.edge {
    stroke: #8a979e;
}

.lv {
    fill: none;
}

.lv.red,
.lv.darkred {
    stroke: #e01010;
    stroke-width: 2;
    stroke-dasharray: 21 9;
}

.lv.darkred {
    stroke: #b81e28;
}

.lv.mid {
    stroke: #1c1c9c;
    stroke-dasharray: 12 12;
}

.lv.target {
    stroke: #4f9f4f;
    stroke-dasharray: 20 8;
}

.cyan {
    stroke: #4dbcf4;
    stroke-width: 2;
}

.purple {
    stroke: #7805a8;
    stroke-width: 2;
}

.last {
    stroke: #000;
    stroke-dasharray: 4 4;
}

.up {
    fill: #159cd4;
    stroke: #0c5a86;
}

.down {
    fill: #fc6f6f;
    stroke: #ae3838;
}

.indicators {
    position: absolute;
    top: 0;
    left: 0;
    display: flex;
    height: 17px;
    border-bottom: 1px solid #74909c;
    background: #cbdde4;
}

.ind {
    display: flex;
    align-items: center;
    gap: 3px;
    padding: 0 1px 0 3px;
    border-right: 1px solid #74909c;
    white-space: nowrap;
}

.ind.icon {
    width: 20px;
}

.ind input {
    appearance: none;
    width: 10px;
    height: 10px;
    border: 1px solid #7f8d94;
}

.swatch {
    width: 10px;
    height: 10px;
    background: #000;
}

.swatch.price {
    background: linear-gradient(90deg, #1a9bd0 50%, #f57070 50%);
}

.day-range {
    position: absolute;
    top: 17px;
    left: 0;
    padding: 1px 1px 1px 3px;
    border-right: 1px solid #74909c;
    border-bottom: 1px solid #74909c;
    background: #fff;
    white-space: nowrap;
}

.price-axis {
    position: relative;
    width: 69px;
    border-left: 1px solid #74909c;
}

.price-axis svg {
    width: 100%;
    height: 100%;
}

.price-axis path,
.time-axis path {
    stroke: #74909c;
    shape-rendering: crispEdges;
}

.major {
    font-weight: bold;
}

.tag-last,
.tag-timer,
.tag-close {
    position: absolute;
    left: 4px;
    padding: 0 2px;
    white-space: nowrap;
}

.tag-last {
    top: 432px;
    width: 63px;
    height: 20px;
    border: 1px solid #8a7a30;
    background: linear-gradient(#ffe23a, #f4c01a);
    font-size: 16px;
    line-height: 18px;
}

.tag-last sup {
    font-size: 10px;
    line-height: 10px;
}

.tag-timer {
    top: 453px;
    height: 15px;
    background: #93e497;
}

.tag-close {
    top: 457px;
    height: 16px;
    border: 1px solid #74909c;
    background: #f2f6f8;
}

.time-axis {
    height: 18px;
    flex: none;
    border-bottom: 1px solid #74909c;
    background: #fff;
}

.time-axis svg {
    width: 100%;
    height: 17px;
}

/* Barre du bas */
.bottombar {
    display: flex;
    align-items: center;
    height: 25px;
    flex: none;
    background: #9cb9c6;
}

.b-icon,
.b-arrow,
.share {
    display: flex;
    align-items: center;
    justify-content: center;
    height: 100%;
    border-right: 1px solid #7e9caa;
}

.b-icon {
    width: 31px;
}

.b-arrow {
    width: 15px;
}

.b-arrow::after {
    content: "";
    border: 3px solid transparent;
    border-top: 4px solid #000;
    border-bottom: none;
}

.white {
    background: #f4f6f8;
}

.share {
    gap: 4px;
    width: 66px;
    background: #2490dc;
    color: #fff;
}

.mini-icons {
    display: flex;
    gap: 5px;
    padding: 0 2px 0 4px;
}

.mini-icons svg,
.zoom svg {
    width: 20px;
    height: 20px;
}

.fold {
    width: 16px;
    color: #345;
    font-size: 16px;
}

.scroll {
    display: flex;
    flex: 1;
    height: 16px;
    border: 1px solid #6f8f9c;
}

.s-btn {
    width: 14px;
    display: grid;
    place-items: center;
    background: linear-gradient(#bcdce8, #9fbfcb);
}

.s-btn::after {
    content: "";
    border: 4px solid transparent;
}

.s-btn.left {
    border-right: 1px solid #6f8f9c;
}

.s-btn.left::after {
    border-right-color: #000;
    border-left: none;
}

.s-btn.right {
    border-left: 1px solid #6f8f9c;
}

.s-btn.right::after {
    border-left-color: #000;
    border-right: none;
}

.s-track {
    flex: 1;
    display: flex;
    justify-content: flex-end;
}

.s-thumb {
    width: 47%;
    border-left: 1px solid #6f8f9c;
    background: linear-gradient(#b8dae6, #9fbfcb);
}

.zoom {
    display: flex;
    gap: 6px;
    padding: 0 3px 0 5px;
}

.dim {
    opacity: 0.6;
}

/* Barre des tâches */
.taskbar {
    display: flex;
    height: 40px;
    flex: none;
    background: #101010;
    color: #fff;
}

.taskbar button {
    width: 49px;
    display: grid;
    place-items: center;
}

.taskbar svg {
    width: 24px;
    height: 24px;
}

.taskbar .open {
    background: linear-gradient(#9a9a9a, #9a9a9a) center bottom / 40px 2px no-repeat;
}

.taskbar .open.current {
    background: linear-gradient(#9a9a9a, #9a9a9a) center bottom / 100% 2px no-repeat, #333;
}

.skype {
    font: bold 14px "Liberation Sans", sans-serif;
    fill: #fff;
}

.clock {
    display: flex;
    flex-direction: column;
    justify-content: center;
    margin-left: auto;
    padding-right: 6px;
    font-family: "Open Sans", sans-serif;
    line-height: 18px;
    text-align: center;
}
```
FILE: chart.js
```js
// Bougies 5 minutes : sens (b = hausse, r = baisse) puis haut, haut du corps, bas du corps, bas.
// Chaque bloc a sa propre origine et sa propre échelle verticale.
var blocks = [
    { top: 180, scale: 2.45, bars: 'r 685 689 716 751,b 693 710 716 741,r 706 710 726 732,r 724 726 795 806,r 745 795 819 832,b 794 797 822 829,b 735 738 799 817,b 703 728 736 741,r 728 731 772 793,r 772 772 785 827,' +
        'r 780 784 785 830,b 742 785 787 790,r 784 785 851 872,b 799 811 851 871,r 799 811 858 923,r 843 856 880 910,b 838 858 880 886,r 853 856 961 981,r 938 961 986 1035,b 909 917 986 1008,' +
        'b 865 881 915 919,r 862 881 959 964,b 892 900 956 957,b 850 880 900 902,b 801 816 878 881,r 796 819 1150 1177,b 1132 1149 1151 1305,r 1056 1152 1162 1195,r 1086 1165 1187 1195,b 1041 1094 1187 1190,' +
        'r 1090 1096 1182 1214,b 1095 1099 1184 1251,b 1040 1040 1098 1143,r 1012 1040 1099 1101,b 1066 1081 1097 1148,r 1066 1081 1108 1143,b 1080 1081 1108 1175,b 1022 1028 1081 1111,r 1027 1030 1072 1116,b 960 966 1060 1089,' +
        'r 961 966 971 1017,b 875 881 968 969,b 867 880 882 915,r 872 876 968 990,b 915 941 971 986,r 821 941 1230 1261,b 1053 1105 1233 1290,r 1099 1105 1326 1376,r 1293 1322 1328 1427,r 1285 1328 1383 1415,' +
        'b 1292 1302 1383 1501,b 1223 1262 1304 1359,b 1223 1233 1262 1361,r 1167 1233 1253 1263,b 1157 1179 1253 1279,b 1155 1160 1180 1246,b 1122 1128 1158 1239,b 941 995 1128 1187,b 534 588 998 1023,b 402 440 588 656,' +
        'b 262 332 444 504,b 120 212 332 333,r 61 207 217 246,b 29 87 214 415,r 78 84 771 856,b 586 655 768 769,r 620 653 952 1035,r 841 959 1145 1153,b 992 1111 1143 1197,r 975 1111 1138 1262,' +
        'b 1085 1087 1140 1248,r 1066 1089 1145 1359,b 995 1096 1145 1258,r 997 1099 1277 1307,b 1041 1101 1280 1325,r 1022 1102 1201 1251,b 1036 1084 1204 1300,b 860 893 1087 1089,b 840 881 885 972,r 840 881 1037 1067,' +
        'r 1037 1037 1172 1199,b 1107 1140 1172 1273,r 1123 1138 1378 1411,b 1246 1263 1380 1410,r 1154 1263 1299 1315,b 1199 1253 1297 1359,b 1228 1236 1252 1403,r 1227 1238 1368 1391,b 1259 1361 1368 1525,r 1326 1358 1459 1497,' +
        'b 1414 1449 1461 1533,r 1378 1449 1488 1533,b 1412 1432 1488 1511' },
    { top: 340, scale: 2.45, bars: 'r 1041 1042 1096 1178,r 1073 1096 1219 1235,r 1147 1221 1341 1355,r 1341 1341 1440 1441,b 1318 1395 1449 1463,b 1352 1360 1395 1456,b 1181 1206 1348 1404,b 1085 1121 1199 1200,b 1022 1072 1118 1132,b 948 993 1074 1077,' +
        'r 990 993 1108 1208,r 1086 1110 1226 1243,r 1225 1228 1319 1442,b 1272 1292 1319 1413,b 1095 1246 1293 1298,b 1110 1167 1245 1285,b 1022 1032 1165 1170,b 926 988 1032 1058,r 963 978 1067 1089,b 941 964 1069 1111,' +
        'b 833 836 962 973,b 718 775 836 850,b 576 611 792 812,b 561 579 611 674,b 430 466 572 573,r 424 466 569 614,b 459 471 567 622,b 397 424 471 561,r 409 422 531 593,b 429 434 531 562,' +
        'r 427 432 523 562,r 500 523 528 603,r 514 528 746 758,r 742 746 756 942,b 587 606 753 855,b 471 518 609 611,r 481 515 528 560,b 405 415 525 538,b 265 293 432 462,r 226 290 307 364,' +
        'r 307 307 425 450,b 307 318 425 447,b 249 266 318 354,b 213 226 268 290,r 224 226 246 256,b 115 141 243 245,r 127 141 146 167,b 117 123 146 151,b 73 98 123 127,b 97 97 98 132,' +
        'b 23 37 97 98,r 36 40 97 98,r 97 97 98 126,r 97 97 136 161,r 42 50 131 140,b 84 97 131 149,r 98 100 163 174,r 149 163 196 224,b 145 170 196 202,r 162 170 202 205,' +
        'r 197 202 216 246,r 210 214 236 268,b 206 232 235 251,r 196 229 232 254,b 180 201 231 250,b 165 187 202 210,r 173 187 245 256,r 236 246 261 287,r 261 261 302 316,r 292 302 329 349,' +
        'b 282 322 334 344,b 283 302 324 326,b 243 263 302 307,r 234 263 265 293,r 260 268 312 315,b 261 276 310 312,b 241 263 277 278,b 240 263 264 300,b 197 236 263 286,b 235 236 237 240,' +
        'r 206 235 237 273,r 236 236 251 266,b 176 196 251 256,r 190 196 238 246,b 175 192 236 243,r 190 192 236 245,r 221 236 258 266,r 234 258 266 290,r 266 268 309 337,r 307 309 356 370,' +
        'r 317 356 373 382,b 326 342 373 384,b 323 342 343 353,b 320 321 342 375,b 309 317 321 321,r 310 315 366 368,b 318 321 366 375,r 313 321 342 351,b 253 254 342 348,r 221 252 268 270,' +
        'r 221 266 273 275,r 254 275 290 315,r 256 290 310 331,r 300 310 318 340,r 318 326 327 349,b 295 297 326 348,r 294 297 308 329,b 287 293 307 315,b 262 268 293 302,r 251 268 285 298,' +
        'b 264 278 287 288,r 273 276 290 293,b 273 280 291 315,r 273 279 291 307,r 278 290 293 300,r 283 293 298 307,r 288 298 305 320,b 293 297 307 332,b 285 295 297 298,b 277 290 295 301,' +
        'r 288 293 310 317,b 297 302 313 318,b 293 295 303 315,b 285 293 296 318,r 285 295 307 318,r 294 307 315 318,b 272 307 315 318,b 297 305 307 315,r 307 307 332 337,r 315 332 340 345,' +
        'b 310 318 342 353,r 309 318 319 334,b 305 308 318 319,b 300 303 310 320,r 300 303 308 323,r 297 308 316 330,r 308 317 318 322,r 309 317 318 327,b 273 278 324 326,r 268 278 327 331,' +
        'r 313 327 348 363,b 318 325 346 375,r 305 325 330 332,b 231 239 332 333,b 181 202 241 244,r 201 202 227 246,b 208 217 224 241,b 174 192 217 231,r 171 191 194 220,r 187 192 202 221,' +
        'r 187 197 219 229' },
    { top: 280, scale: 3, bars: 'b 327 397 451 461,r 363 394 421 434,r 418 421 488 490,r 454 487 529 530,b 422 427 529 546,r 417 427 478 490,r 442 475 482 515,r 466 481 499 540,b 433 439 496 503,b 355 364 439 470,' +
        'b 295 302 364 377,b 266 283 302 434,r 186 283 367 380,r 276 367 400 422,r 348 403 409 434,b 306 310 406 439,b 277 277 310 366,b 156 166 277 310,b 148 151 166 168,r 142 151 295 298,' +
        'b 201 226 292 312,r 195 228 247 294,r 225 247 253 309,b 216 232 256 295,r 211 235 373 390,r 322 373 377 405,b 325 328 373 389,r 316 334 394 437,b 351 370 394 402,r 367 370 460 475,' +
        'r 457 460 475 530,b 438 466 475 490,b 430 445 469 518,r 408 445 508 519,b 475 493 505 545,b 442 460 490 497,r 451 463 502 570,r 490 502 538 557,r 519 538 634 738,r 606 637 649 689,' +
        'b 588 595 649 674,b 553 574 598 626,r 556 574 646 655,r 640 646 799 806,r 756 799 838 857,b 758 760 838 840,r 733 757 772 812,r 724 769 793 827,b 733 754 793 800,b 661 694 754 779,' +
        'b 645 688 697 770,r 660 688 709 733,b 707 709 710 782,b 685 685 709 732,r 684 685 721 773,b 625 649 721 722,b 537 569 652 656,b 534 557 569 626,b 438 499 550 557,b 388 421 496 512,' +
        'b 351 400 424 438,r 369 400 403 431,r 321 403 466 467,r 448 466 568 579,r 562 569 595 614,b 528 538 598 641,r 517 541 703 704,b 652 667 703 731,r 598 667 676 719,b 600 634 673 676,' +
        'b 555 601 637 658,r 569 598 610 647,b 502 502 607 680,b 420 454 502 530,r 451 457 517 617,r 433 517 532 541,b 475 502 535 554,r 502 502 712 833,b 447 490 712 738,r 469 493 658 665,' +
        'r 634 655 784 791,b 555 661 781 782,b 591 631 661 697,b 508 586 634 674,b 540 565 577 708,r 550 565 658 671,b 618 631 661 785,r 589 631 655 740,r 654 655 784 812,b 583 601 784 980,' +
        'b 276 433 598 668,r 339 427 673 795,r 622 676 826 1007,r 591 832 889 920,b 781 790 886 1019,r 492 790 955 973,b 840 937 949 1067,b 760 799 937 1047,b 531 619 799 822,b 420 535 613 623,' +
        'r 504 535 886 922,r 768 886 889 998,r 832 892 1147 1245' },
    { top: 360, scale: 2.8, bars: 'r 811 849 937 1057,b 810 827 940 997,r 772 827 911 957,b 740 760 914 1015,r 675 740 855 957,b 706 763 849 902,r 712 765 821 912,b 661 817 821 830,b 704 712 817 879,r 609 706 975 999,' +
        'r 970 970 1097 1200,r 1092 1096 1161 1299,r 1084 1163 1194 1245,b 1117 1124 1192 1259,b 1053 1107 1124 1170,r 1070 1107 1130 1197,r 1090 1132 1192 1281,r 1143 1199 1208 1310,r 1162 1208 1255 1327,r 1222 1253 1318 1360,' +
        'r 1319 1320 1363 1364,b 1222 1231 1364 1368,r 1178 1233 1261 1273,b 1124 1194 1259 1281,b 1073 1129 1197 1211,r 1076 1129 1194 1210,b 1105 1146 1194 1225,b 1028 1056 1143 1170,b 970 1006 1054 1097,r 994 1006 1071 1178,' +
        'b 962 967 1071 1112,b 879 939 970 998,r 899 942 990 1013,b 947 956 992 1075,b 894 928 953 995,b 852 889 925 979,r 874 889 992 1010,r 959 990 998 1049,r 997 998 1076 1100,r 1073 1073 1206 1239,' +
        'b 1135 1180 1204 1265,r 1170 1183 1202 1266,b 1117 1163 1202 1239,r 1163 1166 1225 1233,b 1107 1112 1216 1217,b 1074 1087 1112 1157,b 997 1020 1084 1118,b 978 979 1020 1058,b 784 830 981 982,b 752 776 830 854,' +
        'b 704 746 774 811,b 648 688 746 792,b 637 643 687 688' }
];

var SVG = 'http://www.w3.org/2000/svg';

function add(parent, name, attrs, text) {
    var el = document.createElementNS(SVG, name);
    for (var key in attrs) {
        el.setAttribute(key, attrs[key]);
    }
    if (text) {
        el.textContent = text;
    }
    parent.appendChild(el);
}

// Bougies
var candles = document.getElementById('candles');
var index = 0;
blocks.forEach(function (block) {
    block.bars.split(',').forEach(function (bar) {
        var p = bar.split(' ');
        var y = p.slice(1).map(function (v) {
            return Math.floor(block.top + v / block.scale);
        });
        var x = Math.floor(4.3 + index * 4.163);
        var cls = p[0] === 'b' ? 'up' : 'down';
        add(candles, 'path', { 'class': cls, d: 'M' + (x + 0.5) + ' ' + y[0] + 'V' + (y[3] + 1) });
        add(candles, 'rect', { 'class': cls, x: x - 1.5, y: y[1] + 0.5, width: 4, height: Math.max(y[2] - y[1], 1) });
        index++;
    });
});

// Libellés des niveaux
var levels = document.getElementById('levels');
[
    [1451, 301, '13 122,5'], [1451, 321, '13 117,4'], [1451, 347, '13 110,7'], [1451, 374, '13 104,0'], [1451, 394, '13 098,9'],
    [1671, 770, '13 002,4'], [1671, 795, '12 996,0'], [1671, 827, '12 987,6'], [1671, 860, '12 979,3'], [1671, 885, '12 972,9'],
    [1110, 886, '12 973'], [1110, 905, '12 968'], [1110, 930, '12 961'], [1110, 955, '12 955'], [1110, 974, '12 950'],
    [1774, 377, '9/15h 13 103,1'], [1765, 467, 'Clo 22h 13 080,0'], [11, 586, 'Clo M'], [3, 994, 'IT-Finance.com - Temps Réel']
].forEach(function (l) {
    add(levels, 'text', { x: l[0], y: l[1] }, l[2]);
});

// Axe des prix
var prices = document.getElementById('prices');
for (var price = 13160; price >= 12960; price -= 20) {
    var py = Math.round(393 + (13100 - price) * 3.9);
    add(prices, 'path', { d: 'M1852 ' + (py + 0.5) + 'h4' });
    add(prices, 'text', { x: 1858, y: py + 4, 'class': price % 100 ? '' : 'major' }, String(price).replace(/(\d{3})$/, ' $1'));
}

// Axe des heures (pas de cotation entre 23:00 et minuit le premier jour)
var hours = document.getElementById('hours');
for (var k = 0; k <= 36; k++) {
    var h = k < 12 ? 11 + k : k - 12;
    var label = k === 12 ? '17' : k === 36 ? '18' : (h < 10 ? '0' : '') + h + ':00';
    var hx = Math.round(17.6 + k * 49.93);
    add(hours, 'path', { d: 'M' + (hx + 0.5) + ' 0v4' });
    add(hours, 'text', { x: hx, y: 15, 'text-anchor': 'middle', 'class': k % 24 === 12 ? 'major' : '' }, label);
}
```
